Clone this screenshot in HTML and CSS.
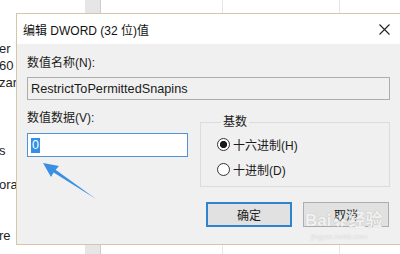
FILE: index.html
```html
<!DOCTYPE html>
<html lang="zh-CN">
  <head>
    <meta charset="UTF-8" />
    <meta name="viewport" content="width=device-width, initial-scale=1.0" />
    <title>编辑 DWORD (32 位)值</title>
    <link rel="stylesheet" href="styles.css">
  </head>
  <body>
    <div class="screen">

      <!-- window behind the dialog -->
      <div class="backdrop">
        <div class="list-col">
          <div class="row">er</div>
          <div class="row">60</div>
          <div class="row">zard</div>
          <div class="row"></div>
          <div class="row"></div>
          <div class="row"></div>
          <div class="row">s</div>
          <div class="row"></div>
          <div class="row">ora</div>
          <div class="row"></div>
          <div class="row"></div>
          <div class="row">re</div>
        </div>
        <div class="scroll"></div>
        <div class="cell cell-a"></div>
        <div class="cell cell-b"></div>
      </div>

      <div class="dialog">
        <div class="titlebar">
          <span class="title">编辑 DWORD (32 位)值</span>
          <div class="close">
            <svg width="11" height="11" viewBox="0 0 11 11">
              <path d="M0.5 0.5 L10.5 10.5 M10.5 0.5 L0.5 10.5" stroke="#222" stroke-width="1.1" fill="none" />
            </svg>
          </div>
        </div>

        <div class="body">
          <div class="label">数值名称(N):</div>
          <div class="field field-readonly">RestrictToPermittedSnapins</div>

          <div class="split">
            <div class="value-col">
              <div class="label">数值数据(V):</div>
              <div class="field field-focus"><span class="selected">0</span></div>
            </div>

            <fieldset class="group">
              <legend>基数</legend>
              <div class="radio-row">
                <span class="radio radio-on"></span>十六进制(H)
              </div>
              <div class="radio-row">
                <span class="radio"></span>十进制(D)
              </div>
            </fieldset>
          </div>

          <div class="buttons">
            <button class="btn btn-default">确定</button>
            <button class="btn">取消</button>
          </div>
        </div>
      </div>

      <!-- annotation arrow pointing at the value box -->
      <svg class="arrow" width="400" height="254" viewBox="0 0 400 254">
        <polygon points="43,163 59,166 55.6,169.8 96,199 53.6,172.4 51,177" fill="#3a8fe3" />
      </svg>

      <div class="watermark">
        <div class="wm-main">Bai<span class="paw">&#10047;</span>经验</div>
        <div class="wm-sub">jingyan.baidu.com</div>
      </div>
    </div>
  </body>
</html>
```

FILE: styles.css
```css
body {
  margin: 0;
  padding: 0;
  background: #fff;
  font-family: "Liberation Sans", "Noto Sans CJK SC", sans-serif;
}

.screen {
  position: relative;
  width: 400px;
  height: 254px;
  overflow: hidden;
  background: #fff;
}

/* background window */
.backdrop {
  display: flex;
  height: 254px;
}

.list-col {
  width: 85px;
  padding-top: 40px;
  font-size: 13px;
  color: #1e1e1e;
}

.row {
  height: 17px;
  line-height: 17px;
  margin-left: -1px;
}

.scroll {
  width: 15px;
  background: #e6e6e6;
  border-right: 1px solid #cdcdcd;
}

.cell {
  border-right: 1px solid #e6e6e6;
}

.cell-a {
  width: 121px;
}

.cell-b {
  width: 116px;
}

/* the dialog */
.dialog {
  position: absolute;
  left: 16px;
  top: 13px;
  width: 392px;
  height: 232px;
  box-sizing: border-box;
  border: 1px solid #d6c6a9;
  background: #f0f0f0;
  color: #1b1b1b;
  font-size: 12px;
}

.titlebar {
  display: flex;
  align-items: center;
  height: 30px;
  background: #fff;
  padding-left: 6px;
}

.title {
  font-size: 12px;
  color: #111;
}

.close {
  margin-left: auto;
  width: 46px;
  display: flex;
  justify-content: center;
  align-items: center;
}

.body {
  padding: 11px 17px 0 10px;
}

.label {
  line-height: 17px;
}

.field {
  box-sizing: border-box;
  display: flex;
  align-items: center;
  padding-left: 3px;
  margin-top: 5px;
}

.field-readonly {
  height: 23px;
  border: 1px solid #adadad;
  background: #f0f0f0;
  font-size: 12.7px;
}

.field-focus {
  height: 24px;
  margin-top: 6px;
  border: 1px solid #4f93d6;
  background: #fff;
  font-size: 12.5px;
}

.selected {
  background: #3390ea;
  color: #fff;
  line-height: 15px;
  padding: 0 1px;
}

.split {
  display: grid;
  grid-template-columns: 161px 1fr;
  column-gap: 12px;
  margin-top: 10px;
}

.group {
  margin: 5px 0 0;
  padding: 3px 0 4px 16px;
  border: 1px solid #dcdcdc;
}

.group legend {
  padding: 0 2px;
  margin-left: 4px;
  line-height: 14px;
}

.radio-row {
  display: flex;
  align-items: center;
  height: 25px;
}

.radio {
  width: 13px;
  height: 13px;
  box-sizing: border-box;
  border: 1px solid #333;
  border-radius: 50%;
  background: #fff;
  margin-right: 3px;
}

.radio-on {
  background: radial-gradient(circle, #1a1a1a 0 3.3px, #fff 3.9px);
}

.buttons {
  display: flex;
  justify-content: flex-end;
  gap: 11px;
  margin-top: 15px;
  margin-right: 1px;
}

.btn {
  width: 86px;
  height: 25px;
  box-sizing: border-box;
  border: 1px solid #adadad;
  background: #e1e1e1;
  font-family: "Liberation Sans", "Noto Sans CJK SC", sans-serif;
  font-size: 12px;
  color: #1b1b1b;
  padding: 0;
}

.btn-default {
  border: 2px solid #2f84d0;
}

/* overlays */
.arrow {
  position: absolute;
  left: 0;
  top: 0;
  pointer-events: none;
}

.watermark {
  position: absolute;
  left: 305px;
  top: 211px;
  color: rgba(255, 255, 255, 0.85);
  text-shadow: 0 0 1px rgba(0, 0, 0, 0.25);
  pointer-events: none;
}

.wm-main {
  font-size: 17px;
  line-height: 20px;
  font-weight: bold;
}

.paw {
  font-size: 13px;
  margin: 0 2px;
}

.wm-sub {
  font-size: 7px;
  line-height: 9px;
  margin-left: 6px;
}
```
